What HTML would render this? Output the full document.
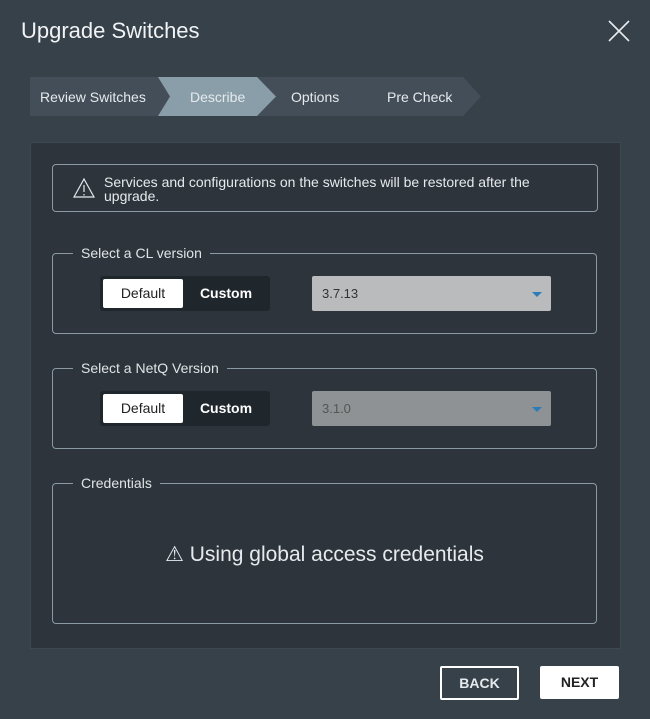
<html><head><style>
body{margin:0;width:650px;height:719px;background:#36414a;font-family:"Liberation Sans",sans-serif;color:#e6eaed;position:relative;overflow:hidden}
.a{position:absolute}
fieldset{position:absolute;border:1px solid #8a9aa5;border-radius:4px;margin:0;padding:0;left:52px;width:543px}
legend{margin-left:20px;padding:0 8px;font-size:14px;color:#e0e4e7}
.tg{position:absolute;left:47px;top:15px;width:170px;height:35px;background:#1f262c;border-radius:3px}
.tg div{position:absolute;top:3px;height:29px;line-height:29px;font-size:14px;text-align:center}
.sel{position:absolute;left:259px;top:15px;width:239px;height:35px;border-radius:2px;font-size:13px;line-height:35px;padding-left:10px;box-sizing:border-box;color:#333}
.sel:after{content:"";position:absolute;right:9px;top:16px;border:5px solid transparent;border-top:5px solid #2b7cb8;border-bottom:0}
.btn{position:absolute;top:666px;width:79px;height:33px;line-height:33px;text-align:center;font-size:14px;border-radius:2px;font-weight:bold}
</style></head><body>
<div class="a" style="left:21px;top:18px;font-size:22px;color:#f1f3f5">Upgrade Switches</div>
<svg class="a" style="left:608px;top:20px" width="22" height="22"><path d="M1 1L21 21M21 1L1 21" stroke="#e6eaed" stroke-width="1.6"/></svg>
<svg class="a" style="left:30px;top:77px" width="452" height="39">
<polygon points="0,0 433,0 451,19.5 433,39 0,39" fill="#444e58"/>
<polygon points="128,0 227,0 246,19.5 227,39 128,39 140,19.5" fill="#899ea9"/>
</svg>
<div class="a" style="left:40px;top:89px;font-size:14px">Review Switches</div>
<div class="a" style="left:190px;top:89px;font-size:14px">Describe</div>
<div class="a" style="left:291px;top:89px;font-size:14px">Options</div>
<div class="a" style="left:387px;top:89px;font-size:14px">Pre Check</div>
<div class="a" style="left:30px;top:142px;width:589px;height:505px;background:#2d343b;border:1px solid #3d4952"></div>
<div class="a" style="left:52px;top:164px;width:544px;height:46px;border:1px solid #8a9aa5;border-radius:4px"></div>
<svg class="a" style="left:73px;top:177px" width="22" height="22"><path d="M11 2L21 20H1Z" fill="none" stroke="#e6eaed" stroke-width="1.2"/><path d="M11 8v7M11 17v1.5" stroke="#e6eaed" stroke-width="1.2"/></svg>
<div class="a" style="left:104px;top:175px;font-size:14px;line-height:14px;width:450px">Services and configurations on the switches will be restored after the upgrade.</div>
<fieldset style="top:245px;height:87px"><legend>Select a CL version</legend>
<div class="tg"><div style="left:3px;width:80px;background:#fff;color:#222;border-radius:2px">Default</div><div style="left:84px;width:84px;color:#fff;font-weight:bold">Custom</div></div>
<div class="sel" style="background:#b9bbbd">3.7.13</div></fieldset>
<fieldset style="top:360px;height:87px"><legend>Select a NetQ Version</legend>
<div class="tg"><div style="left:3px;width:80px;background:#fff;color:#222;border-radius:2px">Default</div><div style="left:84px;width:84px;color:#fff;font-weight:bold">Custom</div></div>
<div class="sel" style="background:#8f9294;color:#555">3.1.0</div></fieldset>
<fieldset style="top:475px;height:147px"><legend>Credentials</legend>
<div style="text-align:center;margin-top:51px;font-size:21px">⚠ Using global access credentials</div></fieldset>
<div class="btn" style="left:440px;border:2px solid #fff;box-sizing:border-box;height:34px;line-height:30px">BACK</div>
<div class="btn" style="left:540px;background:#fff;color:#222">NEXT</div>
</body></html>
